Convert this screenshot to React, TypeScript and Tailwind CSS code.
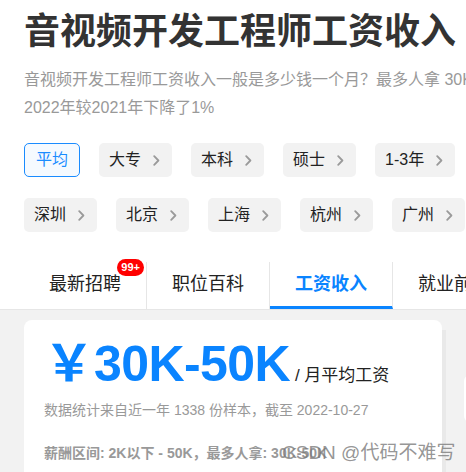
import React from "react";

const font = { fontFamily: '"Liberation Sans", "Noto Sans CJK SC", sans-serif' };

function Chevron() {
  return (
    <svg width="7" height="11" viewBox="0 0 7 11" className="ml-[12px] shrink-0">
      <path d="M1.2 1.2 L5.4 5.5 L1.2 9.8" fill="none" stroke="#9a9a9a" strokeWidth="1.8" strokeLinecap="round" strokeLinejoin="round" />
    </svg>
  );
}

function Chip({ label }: { label: string }) {
  return (
    <div className="flex items-center h-[34px] pl-[10px] pr-[12px] rounded-[5px] bg-[#f2f2f2] text-[16px] text-[#222] shrink-0">
      <span>{label}</span>
      <Chevron />
    </div>
  );
}

export default function App() {
  const tabs = ["最新招聘", "职位百科", "工资收入", "就业前景"];
  return (
    <div className="relative w-[466px] h-[472px] overflow-hidden bg-white" style={font}>
      <div className="px-[24px]">
        <h1 className="mt-[7px] text-[36px] leading-[50px] font-bold text-[#333] whitespace-nowrap">
          音视频开发工程师工资收入
        </h1>
        <div className="mt-[9px] text-[16px] leading-[28px] text-[#999]">
          <p className="whitespace-nowrap">音视频开发工程师工资收入一般是多少钱一个月？最多人拿 30K-50K工资，占</p>
          <p className="whitespace-nowrap">2022年较2021年下降了1%</p>
        </div>

        <div className="mt-[21px] flex gap-[19px]">
          <div className="flex items-center h-[34px] px-[11px] rounded-[5px] border border-[#1a8cff] bg-[#f5faff] text-[16px] text-[#1a8cff] shrink-0">
            平均
          </div>
          <Chip label="大专" />
          <Chip label="本科" />
          <Chip label="硕士" />
          <Chip label="1-3年" />
        </div>
        <div className="mt-[21px] flex gap-[19px]">
          <Chip label="深圳" />
          <Chip label="北京" />
          <Chip label="上海" />
          <Chip label="杭州" />
          <Chip label="广州" />
        </div>
      </div>

      <div className="mt-[30px] flex pl-[24px] border-b border-[#e6e6e6]">
        {tabs.map((t, i) => (
          <div
            key={t}
            className={
              "relative w-[123px] h-[47px] shrink-0 flex items-center justify-center text-[18px] border-r border-[#e6e6e6] " +
              (i === 2 ? "border-b-[3px] border-b-[#0a84ff] text-[#0a84ff] font-bold" : "pb-[3px] text-[#222]")
            }
          >
            {t}
            {i === 0 && (
              <span className="absolute top-[-3px] right-[2px] h-[17px] px-[4px] rounded-full bg-[#ff0000] text-white text-[11px] font-bold leading-[17px]">
                99+
              </span>
            )}
          </div>
        ))}
      </div>

      <div className="flex bg-[#f2f2f2] h-[200px] pt-[10px] pl-[24px]">
        <div className="w-[418px] shrink-0 bg-white rounded-[8px] px-[20px] pt-[9px]">
          <div className="flex items-baseline text-[#0a84ff] font-bold">
            <span className="text-[50px] leading-[60px]" style={{ fontFamily: '"Noto Sans CJK SC", sans-serif' }}>￥</span>
            <span className="text-[50px] leading-[60px] tracking-[-0.6px]">30K-50K</span>
            <span className="ml-[5px] text-[17px] font-normal text-[#222]">/ 月平均工资</span>
          </div>
          <p className="mt-[5px] text-[14px] leading-[22px] text-[#999]">
            数据统计来自近一年 1338 份样本，截至 2022-10-27
          </p>
          <p className="mt-[21px] text-[14px] leading-[22px] font-bold text-[#999] whitespace-nowrap">
            薪酬区间: 2K以下 - 50K，最多人拿: 30K-50K
          </p>
        </div>
        <div className="mt-[10px] w-[4px] shrink-0 bg-[#e9e9e9]" />
        <div className="ml-[18px] mt-[55px] h-[47px] w-[20px] shrink-0 bg-white rounded-l-[6px]" />
      </div>

      <div className="absolute left-[282px] top-[441px] text-[19px] leading-[24px] text-[#7a7a7a]/80 whitespace-nowrap">
        CSDN @代码不难写
      </div>
    </div>
  );
}
